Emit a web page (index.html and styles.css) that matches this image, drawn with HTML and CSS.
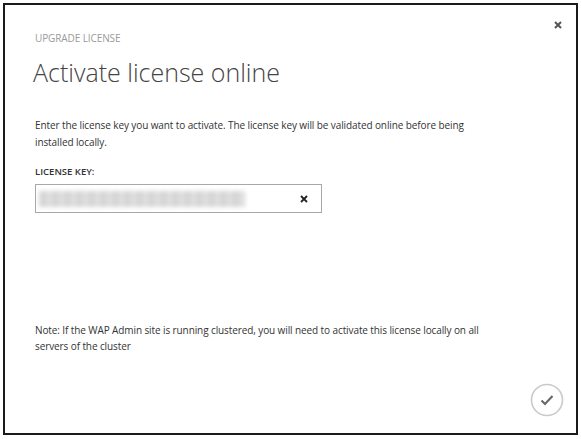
FILE: index.html
```html
<!DOCTYPE html>
<html lang="en">
<head>
<meta charset="utf-8">
<title>Upgrade license</title>
<link rel="stylesheet" href="styles.css">
</head>
<body>
<div class="dialog">
  <button class="close" aria-label="Close">
    <svg width="8" height="8" viewBox="0 0 8 8"><path d="M1 1L7 7M7 1L1 7" stroke="#555" stroke-width="2"/></svg>
  </button>
  <div class="eyebrow">UPGRADE LICENSE</div>
  <h1 class="title">Activate license online</h1>
  <p class="intro">Enter the license key you want to activate. The license key will be validated online before being installed locally.</p>
  <label class="field-label">LICENSE KEY:</label>
  <div class="key-input">
    <span class="key-value"></span>
    <svg class="clear" width="8" height="8" viewBox="0 0 8 8"><path d="M1 1L7 7M7 1L1 7" stroke="#222" stroke-width="1.8"/></svg>
  </div>
  <div class="spacer"></div>
  <p class="note">Note: If the WAP Admin site is running clustered, you will need to activate this license locally on all servers of the cluster</p>
  <div class="footer">
    <button class="confirm" aria-label="Activate">
      <svg width="34" height="34" viewBox="0 0 34 34">
        <circle cx="17" cy="17" r="15.5" fill="none" stroke="#c9c9c9" stroke-width="1.6"/>
        <path d="M11.5 17.5L15 21L22.5 13" fill="none" stroke="#6a6a6a" stroke-width="2.2"/>
      </svg>
    </button>
  </div>
</div>
</body>
</html>
```
FILE: styles.css
```css
html, body {
  margin: 0;
  padding: 0;
  background: #fff;
}

body {
  font-family: "Open Sans", "Noto Sans", sans-serif;
  color: #333;
  height: 439px;
}

.dialog {
  position: relative;
  box-sizing: border-box;
  margin: 3px 3px 0 3px;
  width: 575px;
  height: 432px;
  border: 2px solid #1a1a1a;
  padding: 26px 30px 0 30px;
  display: flex;
  flex-direction: column;
}

.close {
  position: absolute;
  top: 12px;
  right: 10px;
  width: 16px;
  height: 16px;
  padding: 0;
  border: 0;
  background: none;
  display: flex;
  align-items: center;
  justify-content: center;
}

.eyebrow {
  font-size: 10px;
  line-height: 14px;
  color: #9a9a9a;
  letter-spacing: -0.1px;
}

.title {
  margin: 11px 0 0 -2px;
  font-size: 25px;
  font-weight: 300;
  line-height: 32px;
  color: #444;
}

.intro {
  margin: 29px 0 0 0;
  width: 445px;
  font-size: 10px;
  letter-spacing: -0.1px;
  line-height: 17px;
  color: #333;
}

.field-label {
  margin-top: 14px;
  font-size: 9.5px;
  font-weight: 600;
  line-height: 14px;
  color: #333;
}

.key-input {
  margin-top: 5px;
  box-sizing: border-box;
  width: 287px;
  height: 29px;
  border: 1px solid #a8a8a8;
  display: flex;
  align-items: center;
  padding: 0 13px 0 3px;
  justify-content: space-between;
}

.key-value {
  width: 206px;
  height: 16px;
  background:
    repeating-linear-gradient(90deg, #d6d6d6 0 9px, #e4e4e4 9px 12px);
  filter: blur(2px);
}

.spacer {
  flex: 1;
}

.note {
  margin: 0;
  width: 450px;
  font-size: 10px;
  letter-spacing: -0.1px;
  line-height: 16px;
  color: #333;
}

.footer {
  display: flex;
  justify-content: flex-end;
  margin: 29px -18px 16px 0;
}

.confirm {
  width: 34px;
  height: 34px;
  padding: 0;
  border: 0;
  background: none;
}
```
